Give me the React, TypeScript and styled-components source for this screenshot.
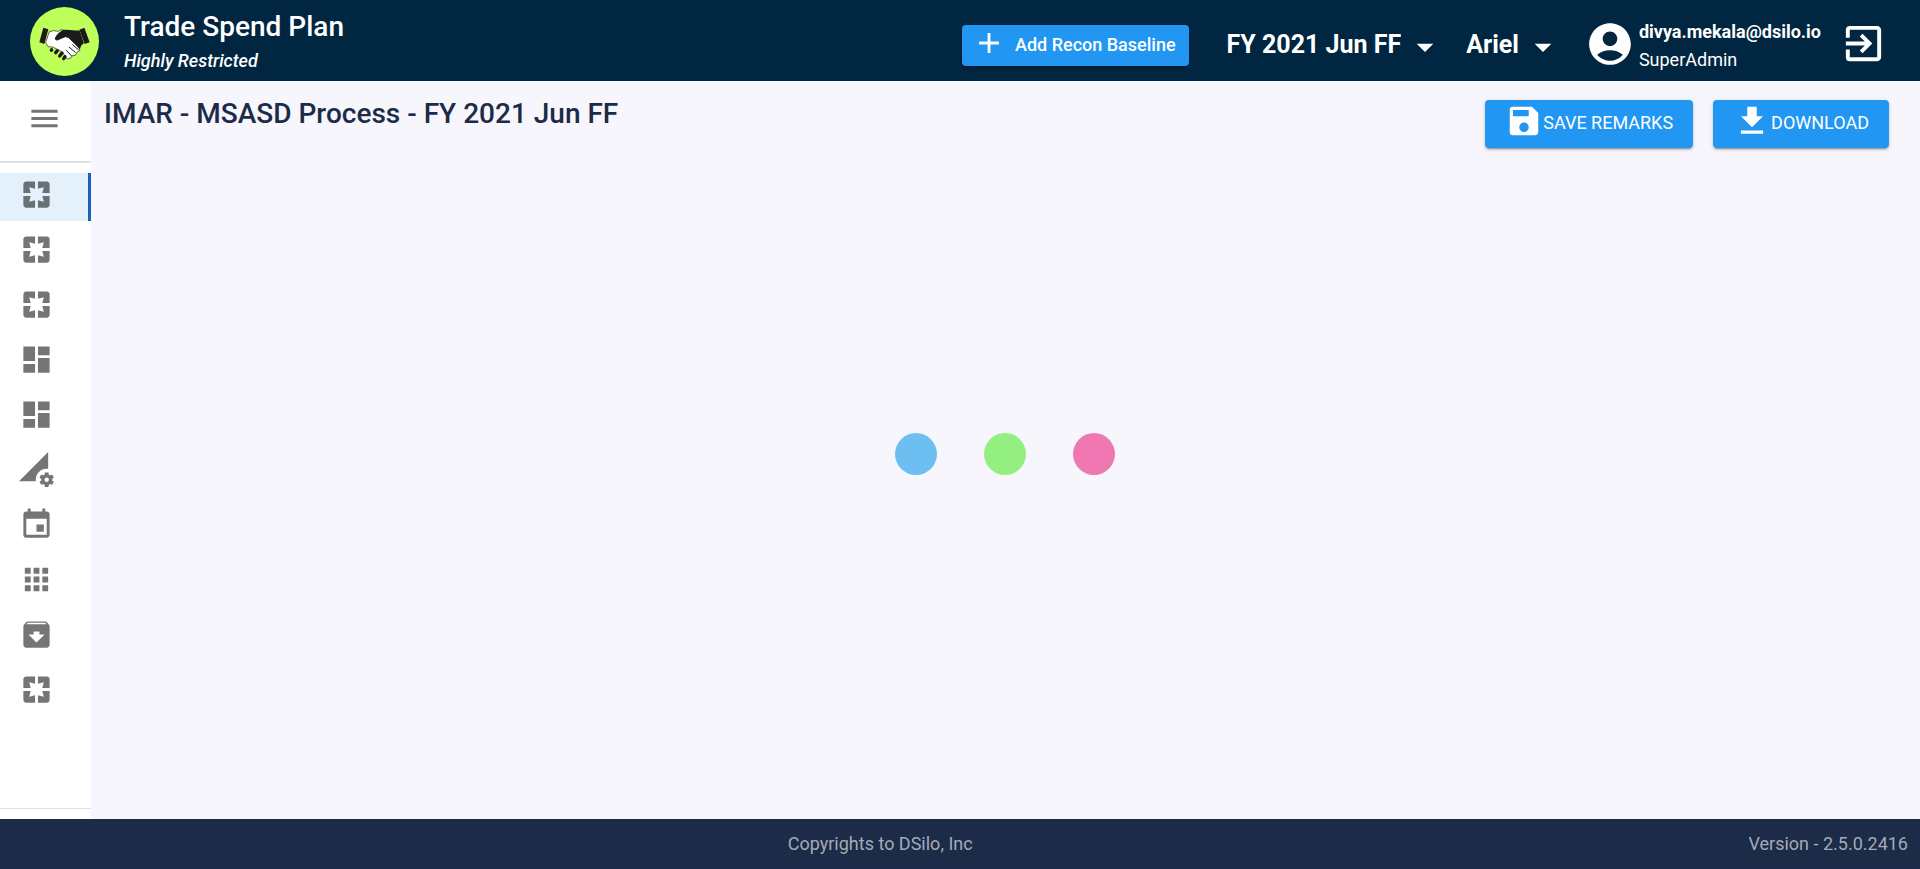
import React from "react";
import styled, { createGlobalStyle } from "styled-components";
import type { IconType } from "react-icons";
import {
  MdAccountCircle,
  MdAdd,
  MdApps,
  MdArchive,
  MdArrowDropDown,
  MdDashboard,
  MdEvent,
  MdExitToApp,
  MdGetApp,
  MdMenu,
  MdPages,
  MdPermDataSetting,
  MdSave,
} from "react-icons/md";

const GlobalStyle = createGlobalStyle`
  *, *::before, *::after { box-sizing: border-box; }
  body {
    margin: 0;
    font-family: Roboto, "Liberation Sans", sans-serif;
    font-size: 18px;
    line-height: 28px;
    background: #f6f6fc;
    color: #1c2b48;
  }
  button, select { font: inherit; color: inherit; border: 0; margin: 0; cursor: pointer; }
  h1, h2, p { margin: 0; }
  svg { display: block; flex: none; }
`;

const Page = styled.div`
  display: flex;
  flex-direction: column;
  min-height: 100vh;
`;

const Header = styled.header`
  display: flex;
  align-items: center;
  justify-content: space-between;
  min-height: 81px;
  padding: 2px 33px 0 30px;
  background: #002641;
  color: #fff;
`;

const Brand = styled.div`
  display: flex;
  align-items: center;
  gap: 25px;
`;

const BrandName = styled.h1`
  font-size: 28px;
  font-weight: 500;
  line-height: 36px;
  margin-bottom: 2px;
`;

const Restriction = styled.p`
  font-style: italic;
  font-weight: 500;
  line-height: 28px;
`;

const HeaderTools = styled.div`
  display: flex;
  align-items: center;
  padding-top: 8px;
`;

const Button = styled.button<{ $compact?: boolean }>`
  display: flex;
  align-items: center;
  gap: ${(p) => (p.$compact ? "9px" : "0")};
  height: ${(p) => (p.$compact ? "41px" : "48px")};
  padding: ${(p) => (p.$compact ? "0 13px 2px 10px" : "0 20px 2px")};
  border-radius: 4px;
  background: #2196f3;
  color: #fff;
  white-space: nowrap;
  font-weight: ${(p) => (p.$compact ? 500 : 400)};
  box-shadow: 0 3px 1px -2px rgba(0, 0, 0, 0.2), 0 2px 2px rgba(0, 0, 0, 0.14),
    0 1px 5px rgba(0, 0, 0, 0.12);

  svg { margin-bottom: 4px; }
`;

const Picker = styled.label`
  display: grid;
  align-items: center;
  justify-items: end;

  > * { grid-area: 1 / 1; }
  svg { pointer-events: none; margin-top: 2px; }
`;

const Select = styled.select`
  appearance: none;
  field-sizing: content;
  background: transparent;
  padding: 0 44px 2px 0;
  font-size: 25px;
  font-weight: 700;
  line-height: 36px;
  option { color: #1c2b48; }
`;

const Pickers = styled.div`
  display: flex;
  gap: 21px;
  margin: 0 22px 0 38px;
`;

const User = styled.div`
  display: flex;
  align-items: center;
  gap: 4px;

  > svg { margin-bottom: 4px; }
`;

const UserName = styled.p`
  font-weight: 700;
`;

const IconButton = styled.button`
  display: flex;
  padding: 0;
  background: transparent;
`;

const Logout = styled(IconButton)`
  margin-left: 19px;
  padding-bottom: 4px;
`;

const Body = styled.div`
  display: flex;
  flex: 1;
`;

const Sidebar = styled.nav`
  display: flex;
  flex-direction: column;
  width: 91px;
  flex: none;
  padding-bottom: 10px;
  background: #fff;
  color: #757575;
`;

const SidebarTop = styled.div`
  display: flex;
  align-items: center;
  justify-content: center;
  height: 82px;
  padding: 0 2px 6px 0;
  border-bottom: 2px solid #e0e0e0;
`;

const NavList = styled.ul`
  display: flex;
  flex-direction: column;
  flex: 1;
  gap: 7px;
  margin: 0;
  padding: 10px 0;
  list-style: none;
  border-bottom: 1px solid #e0e0e0;
`;

const NavLink = styled.a<{ $active?: boolean }>`
  display: flex;
  height: 48px;
  padding: 4px 0 0 19px;
  color: ${(p) => (p.$active ? "#6a7175" : "inherit")};
  background: ${(p) => (p.$active ? "#e4f1fb" : "transparent")};
  border-right: 3px solid ${(p) => (p.$active ? "#1565c0" : "transparent")};
`;

const Main = styled.main`
  display: flex;
  flex-direction: column;
  flex: 1;
`;

const TitleBar = styled.div`
  display: flex;
  justify-content: space-between;
  padding: 15px 31px 0 13px;
`;

const Title = styled.h2`
  font-size: 28px;
  font-weight: 500;
  line-height: 36px;
`;

const Actions = styled.div`
  display: flex;
  gap: 20px;
  padding-top: 4px;
`;

const Loader = styled.div`
  display: flex;
  flex: 1;
  align-items: center;
  justify-content: center;
  gap: 47px;
  padding: 0 2px 60px 0;
`;

const Dot = styled.span<{ $color: string }>`
  width: 42px;
  height: 42px;
  border-radius: 50%;
  background: ${(p) => p.$color};
`;

const Footer = styled.footer`
  display: flex;
  align-items: center;
  height: 50px;
  padding: 0 12px;
  background: #1c2b48;
  color: #a4aab6;
`;

const Copyright = styled.p`
  flex: 1;
  text-align: center;
`;

const Logo = () => (
  <svg width="69" height="69" viewBox="30 21 207 207" aria-hidden="true">
    <circle cx="133.500" cy="124.500" r="103.500" fill="#bfff5a" />
    <g fill="#1c1a1b">
      <path d="M70 83 85 88 73 132 58 127Z" />
      <path d="M178 89 193 83 209 127 194 132Z" />
      <path d="M105 114 124 94Q131 89 142 89L160 93 178 92 191 130 182 139 179 149 164 134 143 119 132 123 119 119 110 120Z" />
    </g>
    <path
      d="M88 95 101 92 115 94 123 89 130 90 112 105 105 117 111 121 136 110 146 113 177 144 180 151 171 157 166 166 158 166 152 174 143 177 137 172 128 158 118 151 108 146 98 141 84 140 77 127Z"
      fill="#fff"
      stroke="#1c1a1b"
      strokeWidth="2"
      strokeLinejoin="round"
    />
    <path
      d="M107 110Q119 92 133 89L155 91 179 92 191 129 183 134 180 146 146 112 136 106 119 116Q108 122 105 116Z"
      fill="#1c1a1b"
    />
    <path d="M148 142 166 157M140 152 155 168M158 134 175 149" stroke="#1c1a1b" strokeWidth="3" strokeLinecap="round" />
    <g stroke="#1c1a1b" strokeWidth="10" strokeLinecap="round">
      <path d="M95 149 94 151M112 152 107 158M126 159 119 168M135 170 131 176" />
    </g>
  </svg>
);

const navItems: { label: string; icon: IconType }[] = [
  { label: "Process", icon: MdPages },
  { label: "Plan", icon: MdPages },
  { label: "Forecast", icon: MdPages },
  { label: "Dashboard", icon: MdDashboard },
  { label: "Summary", icon: MdDashboard },
  { label: "Data settings", icon: MdPermDataSetting },
  { label: "Calendar", icon: MdEvent },
  { label: "Applications", icon: MdApps },
  { label: "Archive", icon: MdArchive },
  { label: "Reports", icon: MdPages },
];

const dots = ["#6dbef1", "#93ef80", "#f078b2"];

const HeaderSelect = ({ label, value }: { label: string; value: string }) => (
  <Picker>
    <Select aria-label={label} defaultValue={value}>
      <option>{value}</option>
    </Select>
    <MdArrowDropDown size={40} />
  </Picker>
);

export default function App() {
  return (
    <Page>
      <GlobalStyle />
      <Header>
        <Brand>
          <Logo />
          <div>
            <BrandName>Trade Spend Plan</BrandName>
            <Restriction>Highly Restricted</Restriction>
          </div>
        </Brand>
        <HeaderTools>
          <Button type="button" $compact>
            <MdAdd size={34} />
            Add Recon Baseline
          </Button>
          <Pickers>
            <HeaderSelect label="Forecast period" value="FY 2021 Jun FF" />
            <HeaderSelect label="Brand" value="Ariel" />
          </Pickers>
          <User>
            <MdAccountCircle size={50} />
            <div>
              <UserName>divya.mekala@dsilo.io</UserName>
              <p>SuperAdmin</p>
            </div>
          </User>
          <Logout type="button" aria-label="Log out">
            <MdExitToApp size={47} />
          </Logout>
        </HeaderTools>
      </Header>
      <Body>
        <Sidebar aria-label="Main">
          <SidebarTop>
            <IconButton type="button" aria-label="Open menu">
              <MdMenu size={35} />
            </IconButton>
          </SidebarTop>
          <NavList>
            {navItems.map(({ label, icon: Icon }, i) => (
              <li key={label}>
                <NavLink href="#" aria-label={label} $active={i === 0}>
                  <Icon size={35} />
                </NavLink>
              </li>
            ))}
          </NavList>
        </Sidebar>
        <Main>
          <TitleBar>
            <Title>IMAR - MSASD Process - FY 2021 Jun FF</Title>
            <Actions>
              <Button type="button">
                <MdSave size={38} />
                SAVE REMARKS
              </Button>
              <Button type="button">
                <MdGetApp size={38} />
                DOWNLOAD
              </Button>
            </Actions>
          </TitleBar>
          <Loader role="status" aria-label="Loading">
            {dots.map((color) => (
              <Dot key={color} $color={color} />
            ))}
          </Loader>
        </Main>
      </Body>
      <Footer>
        <Copyright>Copyrights to DSilo, Inc</Copyright>
        <p>Version - 2.5.0.2416</p>
      </Footer>
    </Page>
  );
}
